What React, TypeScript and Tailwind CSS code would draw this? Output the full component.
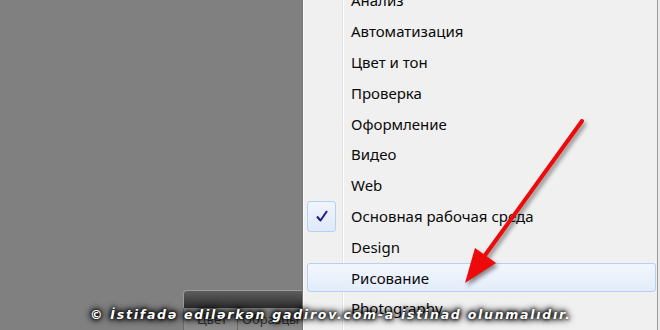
import React from "react";

const items = [
  "Анализ",
  "Автоматизация",
  "Цвет и тон",
  "Проверка",
  "Оформление",
  "Видео",
  "Web",
  "Основная рабочая среда",
  "Design",
  "Рисование",
  "Photography",
];

export default function App() {
  return (
    <div className="relative w-[660px] h-[330px] overflow-hidden bg-[#808080] flex" style={{ fontFamily: '"Noto Sans", "Open Sans", sans-serif' }}>
      <div className="w-[302px] h-full flex flex-col justify-end">
        <div className="ml-[183px] h-[40px] flex flex-col">
          <div className="h-[18px] rounded-tl-[4px] border-t border-l border-[#9a9a9a] bg-gradient-to-b from-[#5e5e5e] to-[#2e2e2e]" />
          <div className="flex-1 flex bg-[#8c8c8c] border-l border-[#6a6a6a] text-[13px] text-[#333] leading-none pt-[5px]">
            <div className="w-[54px] pl-[13px] border-r border-[#6a6a6a]">Цвет</div>
            <div className="pl-[4px] whitespace-nowrap overflow-hidden">Образцы</div>
          </div>
        </div>
      </div>
      <div className="w-[358px] h-full flex border-l border-[#767676]">
        <div className="flex-1 flex bg-[#f0f0f0] border-l border-[#fbfbfb] border-r border-r-[#9c9c9c]">
          <div className="relative w-[39px] h-full border-r border-[#e2e2e2] shadow-[1px_0_0_#ffffff]" />
          <div className="flex-1 flex flex-col mt-[-14.7px]">
            {items.map((t, i) => (
              <div key={t} className="h-[30.8px] shrink-0 flex items-center relative">
                {i === 9 && (
                  <div className="absolute left-[-36px] right-[1px] top-[1px] bottom-[1px] rounded-[3px] border border-[#b4d0f4] bg-gradient-to-b from-[#f3f7fd] to-[#e2ecfa]" />
                )}
                {i === 7 && (
                  <div className="absolute left-[-36px] w-[29px] top-[0px] bottom-[0px] rounded-[3px] border border-[#b4d0f4] bg-gradient-to-b from-[#f0f5fd] to-[#dfe9f9] flex items-center justify-center">
                    <svg width="14" height="14" viewBox="0 0 14 14">
                      <path d="M2 7.5 L5.5 11.5 L12 2" fill="none" stroke="#1c1c8e" strokeWidth="2" strokeLinejoin="round" />
                    </svg>
                  </div>
                )}
                <span className="relative pl-[8px] text-[15px] text-[#0a0a0a] whitespace-nowrap">{t}</span>
              </div>
            ))}
          </div>
        </div>
        <div className="w-[2px] bg-[#e9e9e9]" />
      </div>

      <svg className="absolute left-0 top-0 pointer-events-none" width="660" height="330" style={{ filter: "drop-shadow(2px 3px 2px rgba(0,0,0,0.45))" }}>
        <line x1="582" y1="121" x2="483" y2="258" stroke="#ee0a0a" strokeWidth="4" strokeLinecap="round" />
        <polygon points="465,283 475,248 496,263" fill="#ee0a0a" />
      </svg>

      <div className="absolute left-[90px] top-[306px] whitespace-nowrap text-white font-bold italic text-[12.5px] tracking-[1.75px] [text-shadow:0_0_3px_#000,0_0_5px_#000,0_0_7px_#000,0_0_9px_#000]" style={{ fontFamily: '"DejaVu Sans", Verdana, sans-serif' }}>
        © İstifadə edilərkən gadirov.com-a istinad olunmalıdır.
      </div>
    </div>
  );
}
